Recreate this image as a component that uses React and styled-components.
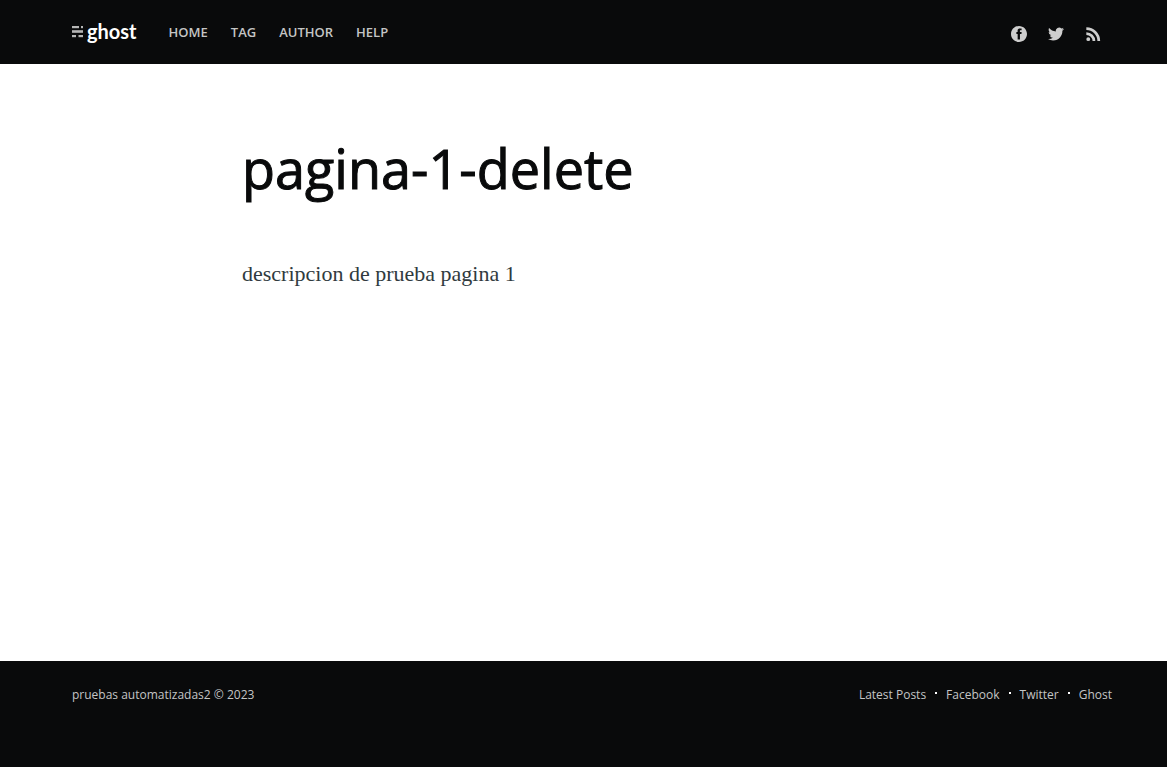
import React from "react";
import styled, { createGlobalStyle } from "styled-components";

const GlobalStyle = createGlobalStyle`
  *, *::before, *::after { box-sizing: border-box; }
  body {
    margin: 0;
    background: #fff;
    color: #3c484e;
    font-family: "Segoe UI", "Open Sans", "Noto Sans", sans-serif;
  }
`;

const Page = styled.div`
  display: flex;
  flex-direction: column;
  min-height: 100vh;
`;

const Band = styled.div`
  padding-left: 17px;
  background: #090a0b;
`;

const Inner = styled.div`
  display: flex;
  justify-content: space-between;
  flex-wrap: wrap;
  max-width: 1040px;
  margin: 0 auto;
`;

const HeaderInner = styled(Inner)`
  align-items: center;
  min-height: 64px;
`;

const Left = styled.div`
  display: flex;
  align-items: center;
  gap: 32px;
`;

const Logo = styled.a`
  display: flex;
  align-items: center;
  gap: 4px;
  padding-bottom: 2px;
  color: #fff;
  font-family: Lato, sans-serif;
  font-size: 20px;
  font-weight: 700;
  line-height: 32px;
  text-decoration: none;
`;

const Nav = styled.nav`
  display: flex;
  gap: 23px;
`;

const NavLink = styled.a`
  color: #c4c5c5;
  font-size: 13px;
  font-weight: 600;
  line-height: 20px;
  text-decoration: none;
  text-transform: uppercase;
`;

const Social = styled.div`
  display: flex;
  gap: 21px;
  padding: 4px 11px 0 0;
`;

const SocialLink = styled.a`
  display: block;
  height: 16px;
  color: #cecece;

  svg {
    display: block;
    width: 16px;
    height: 16px;
    fill: currentColor;
  }
`;

const Main = styled.main`
  flex: 1;
  padding-left: 17px;
`;

const Article = styled.article`
  max-width: 700px;
  margin: 0 auto;
  padding-top: 72px;
`;

const Title = styled.h1`
  margin: 0;
  color: #090a0b;
  font-size: 54px;
  font-weight: 500;
  line-height: 64px;
  -webkit-text-stroke: 1px currentColor;
`;

const Text = styled.p`
  margin: 58px 0 0;
  color: #303a3e;
  font-family: Georgia, "Liberation Serif", serif;
  font-size: 22px;
  line-height: 32px;
`;

const FooterInner = styled(Inner)`
  padding: 21px 0 59px;
  color: #c4c5c5;
  font-size: 12px;
  line-height: 26px;
`;

const FooterLink = styled.a`
  color: inherit;
  text-decoration: none;
`;

const FooterNav = styled.nav`
  display: flex;

  ${FooterLink} + ${FooterLink}::before {
    content: "";
    display: inline-block;
    width: 2px;
    height: 2px;
    margin: 0 9px;
    vertical-align: 5px;
    background: #fff;
  }
`;

const LogoMark = () => (
  <svg width="11" height="14" viewBox="0 0 11 14" aria-hidden="true">
    <g fill="#fff" opacity="0.7">
      <rect x="0" y="2" width="7" height="2.2" />
      <rect x="9" y="2" width="2" height="2.2" />
      <rect x="0" y="6.2" width="11" height="2.6" />
      <rect x="0" y="11" width="4" height="2.2" />
      <rect x="6.5" y="11" width="4.5" height="2.2" />
    </g>
  </svg>
);

const socials = [
  {
    name: "Facebook",
    box: "0 0 32 32",
    d: "M16 0c8.837 0 16 7.163 16 16s-7.163 16-16 16S0 24.837 0 16 7.163 0 16 0zm5.204 4.911h-3.546c-2.103 0-4.443.885-4.443 3.934.01 1.062 0 2.08 0 3.225h-2.433v3.872h2.509v11.147h4.61v-11.22h3.042l.275-3.81h-3.397s.007-1.695 0-2.187c0-1.205 1.253-1.136 1.329-1.136.596 0 1.756.002 2.054 0V4.911z",
  },
  {
    name: "Twitter",
    box: "0 0 24 24",
    d: "M23.954 4.569a10 10 0 0 1-2.825.775 4.958 4.958 0 0 0 2.163-2.723 9.99 9.99 0 0 1-3.127 1.184 4.92 4.92 0 0 0-8.384 4.482C7.691 8.094 4.066 6.13 1.64 3.161a4.822 4.822 0 0 0-.666 2.475c0 1.71.87 3.213 2.188 4.096a4.904 4.904 0 0 1-2.228-.616v.061a4.923 4.923 0 0 0 3.946 4.827 4.996 4.996 0 0 1-2.212.085 4.937 4.937 0 0 0 4.604 3.417 9.868 9.868 0 0 1-6.102 2.105c-.39 0-.779-.023-1.17-.067a13.995 13.995 0 0 0 7.557 2.209c9.054 0 13.999-7.496 13.999-13.986 0-.209 0-.42-.015-.63a9.936 9.936 0 0 0 2.46-2.548l-.047-.02z",
  },
  {
    name: "RSS",
    box: "3 3 18 18",
    d: "M6.68 15.64a2.18 2.18 0 1 1 0 4.36 2.18 2.18 0 0 1 0-4.36zM4.5 4.44A15.56 15.56 0 0 1 20.06 20h-3.1A12.46 12.46 0 0 0 4.5 7.54V4.44zm0 5.46A10.1 10.1 0 0 1 14.6 20h-3.1a7 7 0 0 0-7-7V9.9z",
  },
];

export default function App() {
  return (
    <Page>
      <GlobalStyle />
      <Band as="header">
        <HeaderInner>
          <Left>
            <Logo href="#home">
              <LogoMark />
              ghost
            </Logo>
            <Nav aria-label="Main">
              {["Home", "Tag", "Author", "Help"].map((n) => (
                <NavLink key={n} href={"#" + n.toLowerCase()}>{n}</NavLink>
              ))}
            </Nav>
          </Left>
          <Social>
            {socials.map((s) => (
              <SocialLink key={s.name} href={"#" + s.name.toLowerCase()} aria-label={s.name}>
                <svg viewBox={s.box} aria-hidden="true">
                  <path d={s.d} />
                </svg>
              </SocialLink>
            ))}
          </Social>
        </HeaderInner>
      </Band>
      <Main>
        <Article>
          <Title>pagina-1-delete</Title>
          <Text>descripcion de prueba pagina 1</Text>
        </Article>
      </Main>
      <Band as="footer">
        <FooterInner>
          <section>
            <FooterLink href="#home">pruebas automatizadas2</FooterLink> © 2023
          </section>
          <FooterNav aria-label="Footer">
            {["Latest Posts", "Facebook", "Twitter", "Ghost"].map((n) => (
              <FooterLink key={n} href="#home">{n}</FooterLink>
            ))}
          </FooterNav>
        </FooterInner>
      </Band>
    </Page>
  );
}
